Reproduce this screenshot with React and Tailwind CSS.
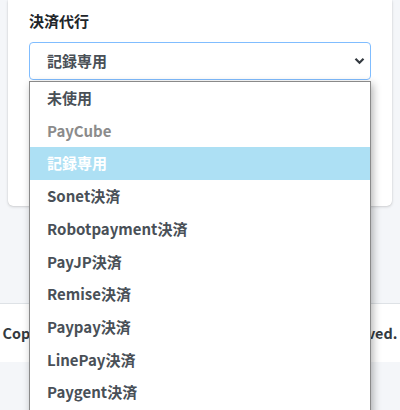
import React from 'react';

const OPTIONS = [
    { label: '未使用' },
    { label: 'PayCube', disabled: true },
    { label: '記録専用', selected: true },
    { label: 'Sonet決済' },
    { label: 'Robotpayment決済' },
    { label: 'PayJP決済' },
    { label: 'Remise決済' },
    { label: 'Paypay決済' },
    { label: 'LinePay決済' },
    { label: 'Paygent決済' },
];

const App = () => {
    return (
        <div
            className="h-[410px] bg-[#f4f6f9] overflow-hidden"
            style={{ fontFamily: '"Noto Sans CJK JP", "Noto Sans", sans-serif' }}
        >
            {/* カード */}
            <div className="px-2">
                <div className="bg-white rounded-b-[5px] shadow-[0_0_1px_rgba(0,0,0,0.2),0_1px_3px_rgba(0,0,0,0.15)] px-[21px] pt-[10px] pb-[22px]">
                    <label className="block text-[15px] leading-[22px] font-bold text-[#212529] mb-[10px]">決済代行</label>
                    <div className="relative">
                        <div className="h-[38px] border border-[#80bdff] rounded-[4px] flex items-center justify-between pl-[17px] pr-[5px] bg-white">
                            <span className="text-[15px] font-bold text-[#495057]">記録専用</span>
                            <svg width="11" height="8" viewBox="0 0 11 8" fill="none">
                                <path d="M1.5 1.8L5.5 5.8L9.5 1.8" stroke="#343a40" strokeWidth="2.2" />
                            </svg>
                        </div>

                        {/* 開いた選択リスト（画面下にはみ出す） */}
                        <div className="absolute left-0 right-0 top-[39px] z-10 min-h-[345px] bg-white border border-[#8a8a8a] shadow-[2px_3px_8px_rgba(0,0,0,0.3)]">
                            {OPTIONS.map(opt => (
                                <div
                                    key={opt.label}
                                    className={`h-[32.7px] flex items-center pl-[17px] text-[15px] font-bold ${
                                        opt.selected
                                            ? 'bg-[#ade0f4] text-white'
                                            : opt.disabled
                                            ? 'text-[#8b8b8b]'
                                            : 'text-[#495057]'
                                    }`}
                                >
                                    {opt.label}
                                </div>
                            ))}
                        </div>
                    </div>
                    <div className="h-[104px]"></div>
                </div>
            </div>

            {/* フッター */}
            <footer className="mt-[97px] h-[59px] bg-white border-t border-[#dee2e6] flex items-center justify-center">
                <strong className="text-[14.4px] text-[#343a40] whitespace-nowrap">
                    Copyright © 2014-2021 AdminLTE.io. All rights reserved.
                </strong>
            </footer>
        </div>
    );
};

export default App;
